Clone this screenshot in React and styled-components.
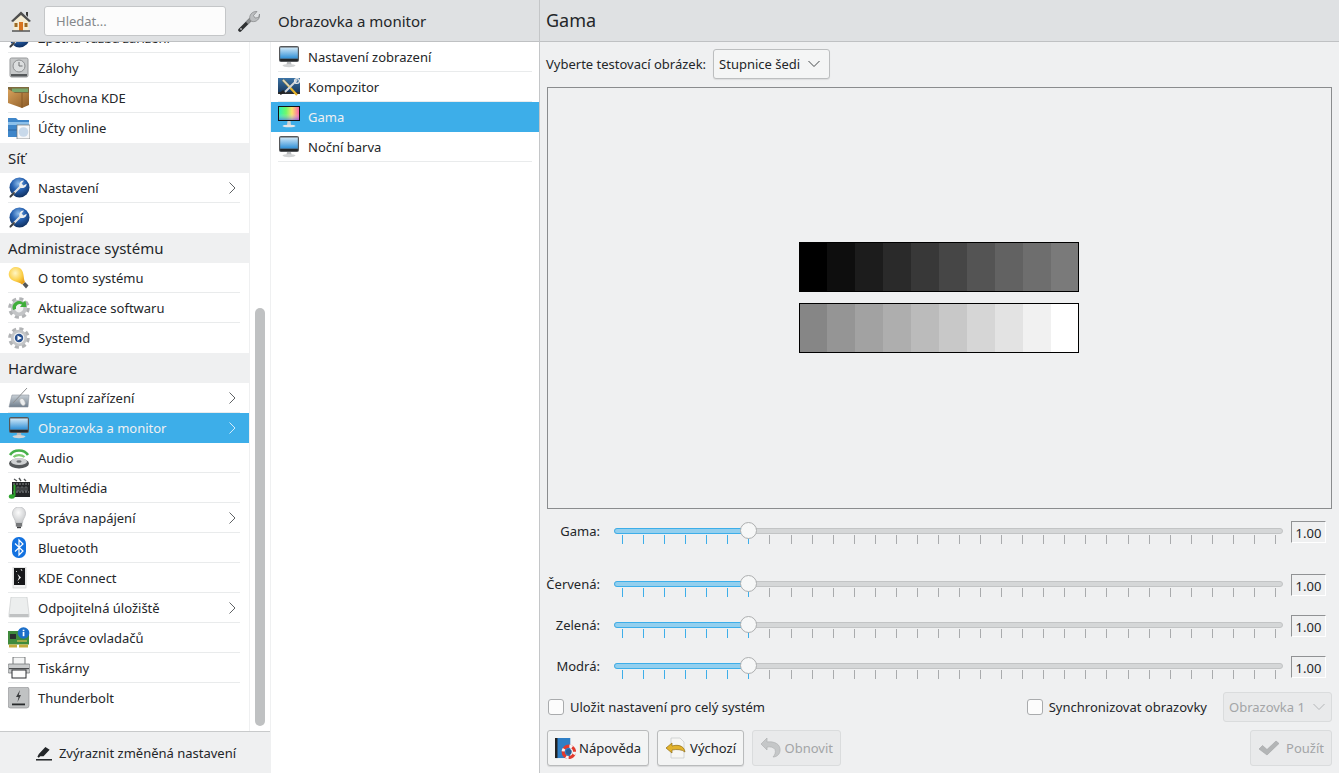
import React from "react";
import styled, { createGlobalStyle } from "styled-components";

const Chevron = ({ size = 12, color = "#5f6265" }) => (
  <svg width={size} height={size} viewBox="0 0 12 12" fill="none">
    <path d="M3.5 .5 L9 6 L3.5 11.5" stroke={color} strokeWidth="1" />
  </svg>
);

const Down = ({ color = "#44484b" }) => (
  <svg width="12" height="8" viewBox="0 0 12 8" fill="none">
    <path d="M.5 1 L6 6.5 L11.5 1" stroke={color} strokeWidth="1" />
  </svg>
);

const Svg = ({ children, size = 22 }) => (
  <svg width={size} height={size} viewBox="0 0 22 22" style={{ flex: "none" }}>
    {children}
  </svg>
);

const MonitorIcon = () => (
  <Svg>
    <defs>
      <linearGradient id="scr" x1="0" y1="0" x2="0" y2="1">
        <stop offset="0" stopColor="#cfe8f8" />
        <stop offset="1" stopColor="#2f8fd6" />
      </linearGradient>
    </defs>
    <rect x="1" y="0" width="20" height="16" rx="2" fill="#55585b" />
    <rect x="2.2" y="1.5" width="17.6" height="11" fill="url(#scr)" />
    <rect x="2.2" y="13" width="17.6" height="2" fill="#25282a" />
    <path d="M9 16h4l.6 3h-5.2z" fill="#b9bbbd" />
    <ellipse cx="11" cy="19.6" rx="6.5" ry="1.6" fill="#d2d4d5" />
  </Svg>
);

const GamaIcon = () => (
  <Svg>
    <defs>
      <linearGradient id="rb" x1="0" y1="0" x2="1" y2="0">
        <stop offset="0" stopColor="#12f0b0" />
        <stop offset=".35" stopColor="#5cf858" />
        <stop offset=".65" stopColor="#fbe05a" />
        <stop offset="1" stopColor="#fb4f9c" />
      </linearGradient>
      <linearGradient id="rb2" x1="0" y1="0" x2="0" y2="1">
        <stop offset="0" stopColor="#fff" stopOpacity=".1" />
        <stop offset=".5" stopColor="#ffffff" stopOpacity=".12" />
        <stop offset="1" stopColor="#5a5cff" stopOpacity=".6" />
      </linearGradient>
    </defs>
    <rect x="0" y="0" width="22" height="15" fill="#111" />
    <rect x="1" y="1" width="20" height="13" fill="url(#rb)" />
    <rect x="1" y="1" width="20" height="13" fill="url(#rb2)" />
    <path d="M9.5 15h3l.5 4h-4z" fill="#cfd1d2" />
    <ellipse cx="11" cy="20" rx="6.5" ry="1.3" fill="#e4e6e7" />
  </Svg>
);

const CompositorIcon = () => (
  <Svg>
    <defs>
      <linearGradient id="cmp" x1="0" y1="0" x2="0" y2="1">
        <stop offset="0" stopColor="#3d74a6" />
        <stop offset="1" stopColor="#17375c" />
      </linearGradient>
    </defs>
    <rect x="0" y="2" width="22" height="15" fill="url(#cmp)" />
    <rect x="0" y="16" width="22" height="2" fill="#2b2d30" />
    <path d="M5 4 L19 19" stroke="#e8b52c" strokeWidth="2.2" />
    <path d="M5 4 L11 10" stroke="#d4d6d8" strokeWidth="1.4" />
    <path d="M19 4 L7 16" stroke="#d4d6d8" strokeWidth="2" />
    <path d="M6 15 L2 18" stroke="#222" strokeWidth="2.4" />
    <circle cx="19" cy="5" r="2.4" fill="none" stroke="#e4e6e7" strokeWidth="1.4" />
  </Svg>
);

const GlobeIcon = ({ id }) => (
  <Svg>
    <defs>
      <radialGradient id={id} cx=".45" cy=".3" r=".75">
        <stop offset="0" stopColor="#8dbcea" />
        <stop offset=".45" stopColor="#2560b0" />
        <stop offset="1" stopColor="#0d2a55" />
      </radialGradient>
    </defs>
    <circle cx="11.5" cy="10.5" r="10" fill={`url(#${id})`} />
    <path d="M2 20 L13 9" stroke="#dfe1e3" strokeWidth="2.2" strokeLinecap="round" />
    <path d="M2.5 19.5 L6 16" stroke="#3b3e41" strokeWidth="1.8" strokeLinecap="round" />
    <path d="M12 10.5 a4.4 4.4 0 0 1 4-7 l-2.4 3 1.8 2 3.2-1.8 a4.4 4.4 0 0 1-6.6 3.8z" fill="#eceeef" />
  </Svg>
);

const BackupIcon = () => (
  <Svg>
    <rect x="2" y="1" width="18" height="19" rx="1.5" fill="#c6c8c9" stroke="#97999b" />
    <circle cx="11" cy="9" r="6" fill="#dcdedf" stroke="#8d8f91" />
    <path d="M11 5v4h3.5" fill="none" stroke="#6f7173" />
    <rect x="3" y="17" width="16" height="2.4" fill="#55585a" />
  </Svg>
);

const WalletIcon = () => (
  <Svg>
    <defs>
      <linearGradient id="wal" x1="0" y1="0" x2="1" y2="1">
        <stop offset="0" stopColor="#d9a25c" />
        <stop offset="1" stopColor="#8a5a26" />
      </linearGradient>
    </defs>
    <path d="M0 0 H21 V7 H0z" fill="#7f6a3e" />
    <path d="M4 1.5 H20 V5 H4z" fill="#7aa76c" />
    <path d="M0 2 L7 6 H21 V18 L14 21 L0 16z" fill="url(#wal)" />
    <path d="M14 6 V21" stroke="#7d5220" strokeWidth=".8" />
  </Svg>
);

const FolderIcon = () => (
  <Svg>
    <path d="M0 1 H8 L10 3 H21 V20 H0z" fill="#3f86c9" />
    <rect x="0" y="5" width="21" height="3" fill="#8cc0ea" />
    <path d="M0 13h9" stroke="#2a629e" />
    <rect x="9" y="8" width="13" height="14" fill="#f6f7f8" stroke="#6d7073" strokeWidth=".7" />
    <circle cx="15.5" cy="15" r="4.8" fill="#c8d9ea" />
  </Svg>
);

const BulbIcon = () => (
  <Svg>
    <defs>
      <radialGradient id="blb" cx=".4" cy=".35" r=".7">
        <stop offset="0" stopColor="#fff6c4" />
        <stop offset=".6" stopColor="#fbd04a" />
        <stop offset="1" stopColor="#e8a017" />
      </radialGradient>
    </defs>
    <path d="M17 15 L20.5 18.5 L18 21.5 L14.5 17.5z" fill="#55585a" />
    <path d="M8 0 C13 0 15 4 15.5 8 C16 11 16 13 17 15 L14 17.5 C12 15.5 9 15 6 14 C2 12.5 0 9 1 5.5 C2 2 5 0 8 0z" fill="url(#blb)" />
  </Svg>
);

const Gear = ({ fill = "#c3c5c7" }) => (
  <>
    <circle cx="11" cy="11" r="9" fill="none" stroke="#b1b3b5" strokeWidth="3.6" strokeDasharray="4 3.07" />
    <circle cx="11" cy="11" r="8.2" fill={fill} />
  </>
);

const UpdateIcon = () => (
  <Svg>
    <Gear />
    <circle cx="11" cy="11" r="4.4" fill="#f1f2f2" />
    <path d="M5 13 A6.5 6.5 0 0 1 15 5.5 L17.5 3.5 L18.5 10 L12 10 L14 7.6 A4 4 0 0 0 8 12z" fill="#3fae3a" />
  </Svg>
);

const SystemdIcon = () => (
  <Svg>
    <Gear />
    <circle cx="11" cy="11" r="5.4" fill="#f4f5f5" />
    <circle cx="11" cy="11" r="4.2" fill="#27508f" />
    <path d="M9.5 8.6 L14 11 L9.5 13.4z" fill="#fff" />
  </Svg>
);

const TabletIcon = () => (
  <Svg>
    <defs>
      <linearGradient id="tab" x1="0" y1="0" x2="0" y2="1">
        <stop offset="0" stopColor="#c9d0d6" />
        <stop offset="1" stopColor="#6f7e8d" />
      </linearGradient>
    </defs>
    <path d="M4 8 H21 L20 20 H1z" fill="url(#tab)" stroke="#8d969f" strokeWidth=".6" />
    <path d="M5 16 L19 1" stroke="#8d8f91" strokeWidth="1" />
    <ellipse cx="14.5" cy="15" rx="2.4" ry="3.8" fill="#eceeef" stroke="#a5a7a9" strokeWidth=".5" transform="rotate(-25 14.5 15)" />
  </Svg>
);

const AudioIcon = () => (
  <Svg>
    <path d="M2 8 A10 8 0 0 1 20 8" fill="none" stroke="#46b04a" strokeWidth="2.6" />
    <path d="M5.5 10 A7 5 0 0 1 16.5 10" fill="none" stroke="#7dcb72" strokeWidth="2.2" />
    <ellipse cx="11" cy="16.5" rx="10" ry="5" fill="#55585a" />
    <ellipse cx="11" cy="14.5" rx="8" ry="3.6" fill="#cfd1d2" />
    <ellipse cx="11" cy="14.5" rx="2.6" ry="1.3" fill="#6c6f72" />
  </Svg>
);

const MediaIcon = () => (
  <Svg>
    <rect x="4" y="5" width="18" height="15" fill="#232527" />
    <path d="M5 7h16M5 15h16" stroke="#8d9092" strokeWidth="1" strokeDasharray="2 1" />
    <path d="M9 10h2v4H9zM13 10h2v4h-2zM17 10h2v4h-2z" fill="none" stroke="#77797b" strokeWidth=".7" />
    <path d="M6 2l3 2M11 1l2 3M16 2l2 2" stroke="#55585a" strokeWidth="1.4" />
    <path d="M6 19 V8 L7 8 V19" fill="#2fa52f" stroke="#2fa52f" />
    <ellipse cx="3.8" cy="19.5" rx="3" ry="2.2" fill="#2fa52f" />
  </Svg>
);

const GreyBulbIcon = () => (
  <Svg>
    <defs>
      <radialGradient id="gblb" cx=".45" cy=".35" r=".7">
        <stop offset="0" stopColor="#fbfbfb" />
        <stop offset="1" stopColor="#c4c6c8" />
      </radialGradient>
    </defs>
    <path d="M11 0 C16 0 18 4 17.5 7.5 C17 10.5 14.5 12.5 14.5 16 H7.5 C7.5 12.5 5 10.5 4.5 7.5 C4 4 6 0 11 0z" fill="url(#gblb)" stroke="#b4b6b8" strokeWidth=".6" />
    <rect x="7.8" y="16" width="6.4" height="3.6" fill="#77797b" />
    <rect x="9" y="19.6" width="4" height="1.6" fill="#3c3e40" />
  </Svg>
);

const BluetoothIcon = () => (
  <Svg>
    <rect x="4" y="0" width="14" height="21" rx="6.5" fill="#1372e0" />
    <path d="M7 6.5 L15 14 L11 18 V3 L15 7 L7 14.5" fill="none" stroke="#fff" strokeWidth="1.2" />
  </Svg>
);

const PhoneIcon = () => (
  <Svg>
    <rect x="5" y="0" width="13" height="21" fill="#f2f3f3" stroke="#c7c9ca" strokeWidth=".6" />
    <rect x="6" y="1" width="11" height="17" fill="#17181a" />
    <path d="M9.5 7 L13 10.5 L9.5 14 L11 10.5z" fill="#f0f0f0" />
    <path d="M13 2l1 2M8 4l1 1M10 15l1 1" stroke="#d8d8d8" strokeWidth=".9" />
  </Svg>
);

const DriveIcon = () => (
  <Svg>
    <path d="M3 0 H19 L21 17 V20 H1 V17z" fill="#eceeee" stroke="#c4c6c7" strokeWidth=".6" />
    <rect x="1.4" y="17" width="19.2" height="3" fill="#c0c2c3" />
  </Svg>
);

const DriverIcon = () => (
  <Svg>
    <rect x="0" y="4" width="21" height="13.5" fill="#3f8a3c" />
    <path d="M2 7h6v5H2z" fill="#2a2c2e" />
    <path d="M9 14h10" stroke="#c8b64a" strokeWidth="1.4" />
    <rect x="1" y="17.5" width="8" height="3" fill="#c4ab3c" />
    <rect x="11" y="17.5" width="9" height="3" fill="#c4ab3c" />
    <circle cx="15.5" cy="6" r="5.8" fill="#1c6fc9" />
    <rect x="14.7" y="5" width="1.7" height="4.2" fill="#fff" />
    <rect x="14.7" y="2.7" width="1.7" height="1.5" fill="#fff" />
  </Svg>
);

const PrinterIcon = () => (
  <Svg>
    <rect x="5" y="0" width="12" height="8" fill="#f4f5f5" stroke="#55585a" strokeWidth=".8" />
    <rect x="0" y="7" width="22" height="9" rx="1" fill="#c9cbcc" stroke="#77797b" strokeWidth=".8" />
    <rect x="4" y="13" width="14" height="8" fill="#fbfbfb" stroke="#2b2d30" strokeWidth="1" />
    <rect x="1" y="11" width="20" height="1.2" fill="#4a4c4e" />
  </Svg>
);

const BoltIcon = () => (
  <Svg>
    <rect x="0" y="0" width="21" height="21" rx="2.5" fill="#c0c2c3" stroke="#8f9193" strokeWidth=".7" />
    <path d="M12 3 L8 10 H10.5 L9.5 15 L13 8 H10.8z" fill="#3c3e40" />
    <rect x="4" y="16.5" width="13" height="1.8" fill="#27292b" />
  </Svg>
);

const HomeIcon = () => (
  <Svg>
    <path d="M15 2h2v5l-2-2z" fill="#3a3a3a" />
    <path d="M2.5 11 V20.5 H17.5 V11 L10 4z" fill="#f5ecd2" />
    <path d="M0 11 L10 1.5 L20 11 L18 12 L10 5 L2 12z" fill="#4f4f4f" />
    <rect x="8" y="12" width="4" height="8.5" fill="#d8741e" />
    <rect x="3.5" y="13" width="3" height="4" fill="#9c6a24" />
    <rect x="13.5" y="13" width="3" height="4" fill="#9c6a24" />
    <path d="M1 21 H19" stroke="#333" strokeWidth="1.2" />
  </Svg>
);

const ToolIcon = () => (
  <Svg>
    <path d="M2 20 L12 10" stroke="#2f3133" strokeWidth="3.6" strokeLinecap="round" />
    <path d="M9 13 L13 9" stroke="#8d8f91" strokeWidth="3.6" />
    <circle cx="3" cy="19" r="1" fill="#b0b2b4" />
    <path d="M12 10 C10.5 5.5 14 1 19 1.5 L15.5 5.5 L17 8 L20.5 7.5 L21.5 4 C22.5 9 18 12.5 14 11.5z" fill="#bcbec0" stroke="#77797b" strokeWidth=".6" />
  </Svg>
);

const PenIcon = () => (
  <svg width="16" height="16" viewBox="0 0 17 16">
    <path d="M3 9 L10 1.5 L14.5 4.5 L8 11.5 L4.5 11.5 L3 13 L1.5 12z" fill="#232629" />
    <rect x="0" y="14.4" width="17" height="1.6" fill="#232629" />
  </svg>
);

const HelpIcon = () => (
  <Svg size={21}>
    <rect x="1" y="0" width="15" height="21" fill="#2f7fc6" />
    <rect x="0" y="0" width="2.6" height="21" fill="#222" />
    <circle cx="14.5" cy="14.5" r="6" fill="none" stroke="#e23a2e" strokeWidth="3.2" />
    <circle cx="14.5" cy="14.5" r="6" fill="none" stroke="#f5f5f5" strokeWidth="3.2" strokeDasharray="3 6.4" />
    <circle cx="14.5" cy="14.5" r="3" fill="#2a5e96" />
  </Svg>
);

const DefaultsIcon = () => (
  <Svg>
    <path d="M6 1 H15 L19 5 V21 H6z" fill="#f6f6f4" stroke="#c3c5c6" strokeWidth=".7" />
    <path d="M1 11 L7 6 V9 C12 7.5 19 8 20 15 C17 12.5 12 12 7 13 V16z" fill="#e2b22b" stroke="#8f6d12" strokeWidth=".7" />
  </Svg>
);

const RestoreIcon = () => (
  <Svg>
    <path d="M1 7 L7 1 V5 C14 4 21 7 20 14 C19.5 18 16 20 13 20 C15 18 16 15 15 12.5 C13.5 10 10 9.5 7 10 V13z" fill="#c5c7c8" stroke="#b0b2b3" strokeWidth=".7" />
  </Svg>
);

const CheckIcon = () => (
  <Svg>
    <path d="M1 12 L4.5 8.5 L9 12.5 L18 4 L21 6.5 L9 18z" fill="#b3b5b6" stroke="#a3a5a6" strokeWidth=".6" />
  </Svg>
);

const SIDEBAR = [
  { label: "Zpětná vazba zařízení", icon: <GlobeIcon id="g0" /> },
  { label: "Zálohy", icon: <BackupIcon /> },
  { label: "Úschovna KDE", icon: <WalletIcon /> },
  { label: "Účty online", icon: <FolderIcon />, last: true },
  { section: "Síť" },
  { label: "Nastavení", icon: <GlobeIcon id="g1" />, more: true },
  { label: "Spojení", icon: <GlobeIcon id="g2" />, last: true },
  { section: "Administrace systému" },
  { label: "O tomto systému", icon: <BulbIcon /> },
  { label: "Aktualizace softwaru", icon: <UpdateIcon /> },
  { label: "Systemd", icon: <SystemdIcon />, last: true },
  { section: "Hardware" },
  { label: "Vstupní zařízení", icon: <TabletIcon />, more: true },
  { label: "Obrazovka a monitor", icon: <MonitorIcon />, more: true, active: true },
  { label: "Audio", icon: <AudioIcon /> },
  { label: "Multimédia", icon: <MediaIcon /> },
  { label: "Správa napájení", icon: <GreyBulbIcon />, more: true },
  { label: "Bluetooth", icon: <BluetoothIcon /> },
  { label: "KDE Connect", icon: <PhoneIcon /> },
  { label: "Odpojitelná úložiště", icon: <DriveIcon />, more: true },
  { label: "Správce ovladačů", icon: <DriverIcon /> },
  { label: "Tiskárny", icon: <PrinterIcon /> },
  { label: "Thunderbolt", icon: <BoltIcon />, last: true },
];

const SUBPAGES = [
  { label: "Nastavení zobrazení", icon: <MonitorIcon /> },
  { label: "Kompozitor", icon: <CompositorIcon /> },
  { label: "Gama", icon: <GamaIcon />, active: true },
  { label: "Noční barva", icon: <MonitorIcon /> },
];

const DARK = ["#000000", "#0e0e0e", "#1c1c1c", "#2a2a2a", "#383838", "#464646", "#545454", "#626262", "#6e6e6e", "#7a7a7a"];
const LIGHT = ["#868686", "#959595", "#a2a2a2", "#aeaeae", "#bbbbbb", "#c8c8c8", "#d6d6d6", "#e3e3e3", "#f1f1f1", "#ffffff"];

const SLIDERS = ["Gama", "Červená", "Zelená", "Modrá"];
const TICKS = Array.from({ length: 32 }, (_, i) => i);

const Slider = ({ label, spaced }) => (
  <SliderRow $spaced={spaced}>
    <SliderLabel>{label}:</SliderLabel>
    <SliderBody>
      <Track />
      <TrackFill style={{ width: "20%" }} />
      <Handle style={{ left: "20%" }} />
      <Ticks>
        {TICKS.map((i) => (
          <Tick key={i} $on={i < 7} />
        ))}
      </Ticks>
    </SliderBody>
    <ValueBox>1.00</ValueBox>
  </SliderRow>
);

const App = () => (
  <Page>
    <GlobalStyle />
    <Sidebar>
      <SearchBar>
        <IconButton>
          <HomeIcon />
        </IconButton>
        <SearchInput placeholder="Hledat..." readOnly />
        <IconButton>
          <ToolIcon />
        </IconButton>
      </SearchBar>
      <SidebarBody>
        <SidebarList>
          <SidebarInner>
            {SIDEBAR.map((item) =>
              item.section ? (
                <SectionTitle key={item.section}>{item.section}</SectionTitle>
              ) : (
                <Row key={item.label} $active={item.active}>
                  <RowInner $active={item.active} $last={item.last}>
                    {item.icon}
                    <RowLabel>{item.label}</RowLabel>
                    {item.more && (
                      <More>
                        <Chevron color={item.active ? "#d5ecfa" : "#5f6265"} />
                      </More>
                    )}
                  </RowInner>
                </Row>
              )
            )}
          </SidebarInner>
        </SidebarList>
        <ScrollColumn>
          <ScrollThumb />
        </ScrollColumn>
      </SidebarBody>
      <HighlightBar>
        <PenIcon />
        Zvýraznit změněná nastavení
      </HighlightBar>
    </Sidebar>

    <SubColumn>
      <ColumnTitle>Obrazovka a monitor</ColumnTitle>
      <SubList>
        {SUBPAGES.map((item) => (
          <SubRow key={item.label} $active={item.active}>
            <RowInner $active={item.active}>
              {item.icon}
              <RowLabel>{item.label}</RowLabel>
            </RowInner>
          </SubRow>
        ))}
      </SubList>
    </SubColumn>

    <Main>
      <MainTitle>Gama</MainTitle>
      <MainBody>
        <PickerRow>
          Vyberte testovací obrázek:
          <Combo>
            Stupnice šedi
            <Down />
          </Combo>
        </PickerRow>
        <Preview>
          <GreyBar>
            {DARK.map((c) => (
              <GreyCell key={c} $color={c} />
            ))}
          </GreyBar>
          <GreyBar>
            {LIGHT.map((c) => (
              <GreyCell key={c} $color={c} />
            ))}
          </GreyBar>
        </Preview>
        <Sliders>
          {SLIDERS.map((name, i) => (
            <Slider key={name} label={name} spaced={i === 0} />
          ))}
        </Sliders>
        <OptionsRow>
          <CheckLabel>
            <CheckBox />
            Uložit nastavení pro celý systém
          </CheckLabel>
          <CheckLabel $right>
            <CheckBox />
            Synchronizovat obrazovky
          </CheckLabel>
          <DisabledCombo>
            Obrazovka 1
            <Down color="#b4b6b8" />
          </DisabledCombo>
        </OptionsRow>
        <ButtonRow>
          <Button $width={102}>
            <HelpIcon />
            Nápověda
          </Button>
          <Button $width={87}>
            <DefaultsIcon />
            Výchozí
          </Button>
          <Button $width={89} disabled>
            <RestoreIcon />
            Obnovit
          </Button>
          <Button $width={82} disabled $right>
            <CheckIcon />
            Použít
          </Button>
        </ButtonRow>
      </MainBody>
    </Main>
  </Page>
);

export default App;

const GlobalStyle = createGlobalStyle`
  html, body {
    margin: 0;
    padding: 0;
    height: 100%;
    overflow: hidden;
  }
  body {
    font-family: "Noto Sans", "Open Sans", sans-serif;
    font-size: 13px;
    color: #232629;
    background: #eff0f1;
  }
`;

const Page = styled.div`
  display: grid;
  grid-template-columns: 270px 270px 1fr;
  width: 1339px;
  height: 773px;
  overflow: hidden;
`;

const Sidebar = styled.div`
  display: flex;
  flex-direction: column;
  min-height: 0;
  background: #fff;
`;

const SearchBar = styled.div`
  display: flex;
  align-items: center;
  height: 41px;
  padding: 0 10px 0 11px;
  gap: 12px;
  background: #dfe1e3;
  border-bottom: 1px solid #bfc1c3;
  flex: none;
`;

const IconButton = styled.div`
  display: flex;
  width: 21px;
  height: 22px;
  flex: none;
`;

const SearchInput = styled.input`
  width: 182px;
  height: 30px;
  box-sizing: border-box;
  padding: 0 11px;
  background: #fcfcfc;
  border: 1px solid #c4c6c8;
  border-radius: 3px;
  font: inherit;
  color: #232629;
  outline: none;
  &::placeholder {
    color: #85888b;
    opacity: 1;
  }
`;

const SidebarBody = styled.div`
  display: flex;
  flex: 1;
  min-height: 0;
`;

const SidebarList = styled.div`
  width: 249px;
  border-right: 1px solid #eff0f1;
  overflow: hidden;
  flex: none;
`;

const SidebarInner = styled.div`
  margin-top: -19px;
`;

const ScrollColumn = styled.div`
  display: flex;
  flex: 1;
  padding: 266px 5px 5px;
`;

const ScrollThumb = styled.div`
  width: 10px;
  background: #bfc1c2;
  border-radius: 5px;
`;

const SectionTitle = styled.div`
  display: flex;
  align-items: center;
  height: 30px;
  padding-left: 8px;
  background: #eff0f1;
  font-size: 15px;
`;

const Row = styled.div`
  padding: 0 9px 0 8px;
  background: ${(p) => (p.$active ? "#3daee9" : "transparent")};
  color: ${(p) => (p.$active ? "#eff0f1" : "#232629")};
`;

const SubRow = styled(Row)`
  padding: 0 7px;
`;

const RowInner = styled.div`
  display: flex;
  align-items: center;
  gap: 8px;
  height: 30px;
  box-sizing: border-box;
  border-bottom: 1px solid ${(p) => (p.$active || p.$last ? "transparent" : "#e9ebec")};
`;

const RowLabel = styled.span`
  white-space: nowrap;
`;

const More = styled.span`
  display: flex;
  margin-left: auto;
  margin-right: 2px;
`;

const HighlightBar = styled.div`
  display: flex;
  align-items: center;
  justify-content: center;
  gap: 7px;
  height: 41px;
  flex: none;
  padding-left: 2px;
  background: #eff0f1;
  border-top: 1px solid #c8cacb;
`;

const SubColumn = styled.div`
  display: flex;
  flex-direction: column;
  background: #fff;
  border-right: 1px solid #c4c6c8;
`;

const ColumnTitle = styled.div`
  display: flex;
  align-items: center;
  height: 41px;
  flex: none;
  padding-left: 8px;
  font-size: 15px;
  background: #dfe1e3;
  border-bottom: 1px solid #bfc1c3;
`;

const SubList = styled.div`
  flex: 1;
  border-left: 1px solid #eff0f1;
`;

const Main = styled.div`
  display: flex;
  flex-direction: column;
  min-width: 0;
`;

const MainTitle = styled.div`
  display: flex;
  align-items: center;
  height: 39px;
  flex: none;
  padding: 0 0 2px 6px;
  font-size: 18px;
  background: #dfe1e3;
  border-bottom: 1px solid #bfc1c3;
`;

const MainBody = styled.div`
  display: flex;
  flex-direction: column;
  flex: 1;
  min-height: 0;
  padding: 7px 7px 7px 6px;
`;

const PickerRow = styled.div`
  display: flex;
  align-items: center;
  gap: 7px;
  height: 30px;
  flex: none;
  white-space: nowrap;
`;

const Combo = styled.div`
  display: flex;
  align-items: center;
  justify-content: space-between;
  width: 117px;
  height: 30px;
  box-sizing: border-box;
  padding: 0 9px 0 5px;
  background: #f4f5f5;
  border: 1px solid #bcbebf;
  border-radius: 3px;
  box-shadow: 0 1px 1px rgba(0, 0, 0, 0.08);
`;

const Preview = styled.div`
  display: flex;
  flex-direction: column;
  align-items: center;
  justify-content: center;
  gap: 11px;
  flex: 1;
  min-height: 0;
  margin: 8px 0 0 1px;
  padding: 0 1px 1px 0;
  border: 1px solid #8a8c8e;
`;

const GreyBar = styled.div`
  display: flex;
  width: 280px;
  height: 50px;
  outline: 1px solid #000;
  outline-offset: -1px;
`;

const GreyCell = styled.div`
  width: 28px;
  background: ${(p) => p.$color};
`;

const Sliders = styled.div`
  display: flex;
  flex-direction: column;
  gap: 19px;
  flex: none;
  margin-top: 12px;
  padding-right: 6px;
`;

const SliderRow = styled.div`
  display: flex;
  height: 22px;
  margin-bottom: ${(p) => (p.$spaced ? "12px" : "0")};
`;

const SliderLabel = styled.div`
  display: flex;
  justify-content: flex-end;
  width: 54px;
  height: 20px;
  line-height: 20px;
  white-space: nowrap;
  flex: none;
`;

const SliderBody = styled.div`
  position: relative;
  flex: 1;
  margin: 0 8px 0 14px;
`;

const Track = styled.div`
  height: 6px;
  margin-top: 7px;
  box-sizing: border-box;
  background: #d5d7d8;
  border: 1px solid #c2c4c5;
  border-radius: 3px;
`;

const TrackFill = styled.div`
  position: absolute;
  left: 0;
  top: 7px;
  height: 6px;
  box-sizing: border-box;
  background: #93cfee;
  border: 1px solid #3daee9;
  border-radius: 3px;
`;

const Handle = styled.div`
  position: absolute;
  top: 1px;
  width: 17px;
  height: 17px;
  margin-left: -8px;
  box-sizing: border-box;
  background: #f6f7f7;
  border: 1px solid #adafb0;
  border-radius: 50%;
`;

const Ticks = styled.div`
  display: flex;
  justify-content: space-between;
  margin-top: 1px;
  padding: 0 7px 0 8px;
`;

const Tick = styled.div`
  width: 1px;
  height: 9px;
  background: ${(p) => (p.$on ? "#3daee9" : "#a9abad")};
`;

const ValueBox = styled.div`
  display: flex;
  align-items: center;
  justify-content: center;
  width: 35px;
  height: 22px;
  padding-top: 2px;
  box-sizing: border-box;
  flex: none;
  border-top: 1px solid #909294;
  border-left: 1px solid #909294;
  border-right: 1px solid #fff;
  border-bottom: 1px solid #fff;
`;

const OptionsRow = styled.div`
  display: flex;
  align-items: center;
  height: 30px;
  flex: none;
  margin-top: 14px;
  padding-left: 2px;
`;

const CheckLabel = styled.label`
  display: flex;
  align-items: center;
  gap: 6px;
  white-space: nowrap;
  margin-left: ${(p) => (p.$right ? "auto" : "0")};
`;

const CheckBox = styled.span`
  display: block;
  width: 16px;
  height: 16px;
  box-sizing: border-box;
  background: #fcfcfc;
  border: 1px solid #a9abad;
  border-radius: 3px;
`;

const DisabledCombo = styled.div`
  display: flex;
  align-items: center;
  justify-content: space-between;
  width: 109px;
  height: 30px;
  margin-left: 16px;
  box-sizing: border-box;
  padding: 0 6px 0 5px;
  background: #e9eaeb;
  border: 1px solid #dadcdd;
  border-radius: 3px;
  color: #a3a5a7;
`;

const ButtonRow = styled.div`
  display: flex;
  gap: 8px;
  height: 36px;
  flex: none;
  margin-top: 8px;
  padding-left: 1px;
`;

const Button = styled.button`
  display: flex;
  align-items: center;
  justify-content: space-between;
  width: ${(p) => p.$width}px;
  height: 36px;
  padding: 0 7px;
  font: inherit;
  color: ${(p) => (p.disabled ? "#a3a5a7" : "#232629")};
  background: ${(p) => (p.disabled ? "#e9eaeb" : "#f3f4f4")};
  border: 1px solid ${(p) => (p.disabled ? "#dadcdd" : "#b9bbbc")};
  border-radius: 3px;
  box-shadow: ${(p) => (p.disabled ? "none" : "0 1px 1px rgba(0, 0, 0, 0.1)")};
  margin-left: ${(p) => (p.$right ? "auto" : "0")};
`;
